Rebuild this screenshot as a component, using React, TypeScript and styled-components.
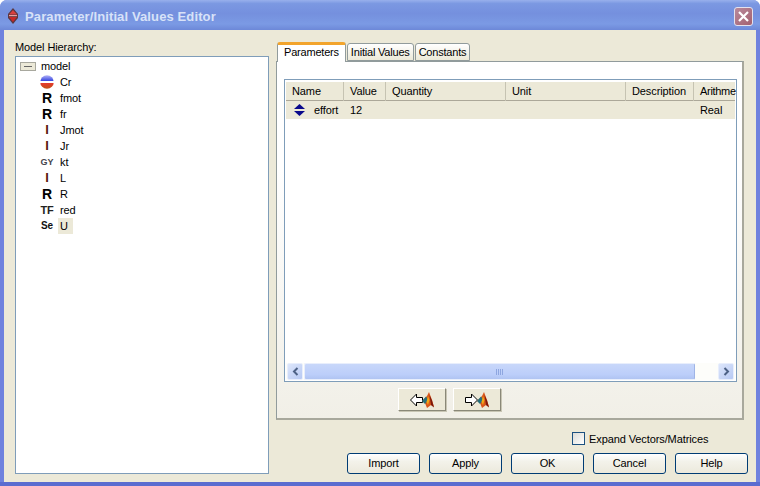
import React from "react"
import styled, { createGlobalStyle } from "styled-components"

const GlobalStyle = createGlobalStyle`
  html, body { margin: 0; padding: 0; background: #fff; }
  body { font-family: "Liberation Sans", Arial, sans-serif; font-size: 11px; letter-spacing: -0.1px; color: #000; }
`

const Window = styled.div`
  width: 760px;
  height: 486px;
  box-sizing: border-box;
  display: flex;
  flex-direction: column;
  background: #6f82de;
  border-bottom: 4px solid #5a6cd0;
  border-radius: 7px 7px 0 0;
  overflow: hidden;
`

const TitleBar = styled.div`
  height: 30px;
  flex: none;
  box-sizing: border-box;
  display: flex;
  align-items: center;
  padding: 2px 7px 0 7px;
  gap: 6px;
  background: linear-gradient(180deg, #98b0ec 0, #7b98e2 12%, #7590de 45%, #7b9ae4 80%, #6d88d8 100%);
`

const TitleText = styled.div`
  flex: 1;
  font-family: "Liberation Sans", Arial, sans-serif;
  font-weight: bold;
  font-size: 13px;
  letter-spacing: 0.12px;
  color: #d8e2f8;
  white-space: nowrap;
`

const CloseButton = styled.div`
  width: 19px;
  height: 19px;
  box-sizing: border-box;
  border: 1px solid #e4e2ee;
  border-radius: 3px;
  background: linear-gradient(135deg, #b88a9c, #a4606f);
  display: flex;
  align-items: center;
  justify-content: center;
`

const Client = styled.div`
  flex: 1;
  margin: 0 4px;
  box-sizing: border-box;
  background: #ece9d8;
  display: flex;
  gap: 7px;
  padding: 11px 8px 11px 11px;
`

const LeftColumn = styled.div`
  width: 254px;
  display: flex;
  flex-direction: column;
`

const TreeLabel = styled.div`
  height: 15px;
  line-height: 13px;
`

const TreeBox = styled.div`
  flex: 1;
  box-sizing: border-box;
  border: 1px solid #7f9db9;
  background: #fff;
  padding: 1px 0 0 4px;
`

const TreeRow = styled.div<{ $root?: boolean }>`
  height: 16px;
  display: flex;
  align-items: center;
  padding-left: ${(p) => (p.$root ? 0 : 16)}px;
`

const IconSlot = styled.div<{ $wide?: boolean }>`
  width: ${(p) => (p.$wide ? 19 : 22)}px;
  flex: none;
  display: flex;
  justify-content: ${(p) => (p.$wide ? "flex-start" : "center")};
  align-items: center;
`

const Glyph = styled.span<{ $size: number; $color: string }>`
  font-weight: bold;
  font-size: ${(p) => p.$size}px;
  color: ${(p) => p.$color};
  line-height: 16px;
`

const TreeName = styled.span<{ $selected?: boolean }>`
  line-height: 16px;
  padding: 0 2px;
  background: ${(p) => (p.$selected ? "#ece9d8" : "transparent")};
  min-width: ${(p) => (p.$selected ? 11 : 0)}px;
`

const RightColumn = styled.div`
  flex: 1;
  display: flex;
  flex-direction: column;
`

const TabStrip = styled.div`
  display: flex;
  align-items: flex-end;
  padding: 1px 0 0 1px;
  gap: 1px;
  margin-bottom: -1px;
  position: relative;
  z-index: 1;
`

const Tab = styled.div<{ $active?: boolean }>`
  box-sizing: border-box;
  height: ${(p) => (p.$active ? 20 : 18)}px;
  padding: 0 ${(p) => (p.$active ? 6 : 3)}px ${(p) => (p.$active ? 3 : 0)}px;
  display: flex;
  align-items: center;
  letter-spacing: -0.2px;
  border: 1px solid #919b9c;
  border-bottom: ${(p) => (p.$active ? "none" : "1px solid #919b9c")};
  border-top: ${(p) => (p.$active ? "3px solid #f2a42c" : "1px solid #919b9c")};
  border-radius: 3px 3px 0 0;
  background: ${(p) => (p.$active ? "#fff" : "linear-gradient(180deg, #fff, #ece9d8)")};
  margin-bottom: ${(p) => (p.$active ? 0 : 1)}px;
`

const TabPanel = styled.div`
  width: 468px;
  height: 359px;
  box-sizing: border-box;
  border: 1px solid #919b9c;
  border-right: 2px solid #a8a89c;
  border-bottom: 2px solid #a8a89c;
  background: linear-gradient(180deg, #fff 0, #fff 30%, #f1efe7 100%);
  padding: 17px 5px 0 7px;
  display: flex;
  flex-direction: column;
`

const TableFrame = styled.div`
  height: 303px;
  flex: none;
  box-sizing: border-box;
  border: 1px solid #7f9db9;
  background: #fff;
  padding: 2px 1px 1px;
  display: flex;
  flex-direction: column;
`

const columns = "58px 42px 120px 120px 68px 1fr"

const HeaderRow = styled.div`
  display: grid;
  grid-template-columns: ${columns};
  height: 19px;
  background: #ece9d8;
  border-bottom: 1px solid #aca899;
  box-sizing: border-box;
`

const HeaderCell = styled.div`
  line-height: 19px;
  padding-left: 6px;
  white-space: nowrap;
  border-right: 1px solid #c6c3b2;
  &:last-child {
    border-right: none;
    letter-spacing: -0.3px;
  }
`

const DataRow = styled.div`
  display: grid;
  grid-template-columns: ${columns};
  height: 18px;
  background: #ece9d8;
`

const DataCell = styled.div`
  line-height: 18px;
  padding-left: 6px;
  white-space: nowrap;
  display: flex;
  align-items: center;
`

const NameCell = styled(DataCell)`
  padding-left: 8px;
  gap: 9px;
`

const ScrollBar = styled.div`
  margin-top: auto;
  height: 17px;
  display: flex;
  align-items: stretch;
  gap: 1px;
  background: #fdfdfa;
  padding: 0 1px;
`

const ScrollButton = styled.div`
  width: 16px;
  box-sizing: border-box;
  border: 1px solid #e8eefc;
  border-radius: 2px;
  background: linear-gradient(135deg, #dde6fb, #b7c9f3);
  display: flex;
  align-items: center;
  justify-content: center;
`

const ScrollThumb = styled.div`
  width: 391px;
  box-sizing: border-box;
  border: 1px solid #e8eefc;
  border-right-color: #9fb4e6;
  border-radius: 2px;
  background: linear-gradient(180deg, #c8d7fa, #bccefa 70%, #b0c4f2);
  display: flex;
  align-items: center;
  justify-content: center;
  gap: 1px;
`

const Grip = styled.i`
  width: 1px;
  height: 6px;
  background: #8ea6e0;
`

const ScrollSpacer = styled.div`
  flex: 1;
`

const TransferRow = styled.div`
  display: flex;
  gap: 7px;
  margin-top: 6px;
  padding-left: 114px;
`

const TransferButton = styled.div`
  width: 48px;
  height: 23px;
  box-sizing: border-box;
  background: #ece9d8;
  border: 1px solid;
  border-color: #fff #8a8878 #8a8878 #fff;
  box-shadow: 1px 1px 0 #c8c5b4;
  display: flex;
  align-items: center;
  justify-content: center;
`

const CheckRow = styled.div`
  display: flex;
  align-items: center;
  gap: 4px;
  margin-top: 12px;
  padding-left: 296px;
  height: 13px;
`

const CheckBox = styled.div`
  width: 13px;
  height: 13px;
  box-sizing: border-box;
  border: 1px solid #1c5180;
  background: linear-gradient(135deg, #dcdcd7, #fff);
`

const ButtonRow = styled.div`
  display: flex;
  gap: 9px;
  margin-top: 8px;
  padding-left: 71px;
`

const DialogButton = styled.div`
  width: 73px;
  height: 21px;
  box-sizing: border-box;
  border: 1px solid #003c74;
  border-radius: 3px;
  padding-bottom: 1px;
  background: linear-gradient(180deg, #fff, #f3f2ea 40%, #ece9dc);
  display: flex;
  align-items: center;
  justify-content: center;
  white-space: nowrap;
`

const BondIcon = () => (
  <svg width="14" height="14" viewBox="0 0 14 14">
    <defs>
      <linearGradient id="ball" x1="0" y1="0" x2="0" y2="1">
        <stop offset="0" stopColor="#b4b4f6" />
        <stop offset="0.44" stopColor="#2f3fe0" />
        <stop offset="0.45" stopColor="#fff" />
        <stop offset="0.55" stopColor="#fff" />
        <stop offset="0.56" stopColor="#e83830" />
        <stop offset="1" stopColor="#c05018" />
      </linearGradient>
    </defs>
    <circle cx="7" cy="7" r="6.8" fill="url(#ball)" />
  </svg>
)

const ModelIcon = () => (
  <svg width="16" height="9" viewBox="0 0 16 9">
    <rect x="0.5" y="0.5" width="15" height="8" fill="#ece9d8" stroke="#a8a89e" />
    <rect x="4" y="4" width="8" height="1" fill="#666" />
  </svg>
)

const TitleIcon = () => (
  <svg width="12" height="16" viewBox="0 0 12 16">
    <path d="M6 0 L11 6 V10 L6 16 L1 10 V6 Z" fill="#5a3840" />
    <path d="M6 2 L10 6.5 H2 Z" fill="#d84040" />
    <path d="M2 9 H10 L6 14 Z" fill="#c82828" />
    <rect x="2" y="7" width="8" height="1.2" fill="#e8a0a0" />
  </svg>
)

const CloseIcon = () => (
  <svg width="13" height="13" viewBox="0 0 13 13">
    <path d="M2 2 L11 11 M11 2 L2 11" stroke="#fff" strokeWidth="2.2" />
  </svg>
)

const DiamondIcon = () => (
  <svg width="11" height="12" viewBox="0 0 11 12">
    <path d="M5.5 0 L11 5 H0 Z" fill="#0a0a8c" />
    <path d="M0 7 H11 L5.5 12 Z" fill="#0a0a8c" />
  </svg>
)

const ScrollArrow = ({ right }: { right?: boolean }) => (
  <svg width="7" height="9" viewBox="0 0 7 9">
    <path d={right ? "M1.5 1 L5 4.5 L1.5 8" : "M5.5 1 L2 4.5 L5.5 8"} fill="none" stroke="#4d6185" strokeWidth="2" />
  </svg>
)

const TransferIcon = ({ right }: { right?: boolean }) => (
  <svg width="24" height="16" viewBox="0 0 24 16">
    <path
      d={right ? "M0.5 5.5 H6.5 V2 L12.5 8 L6.5 14 V10.5 H0.5 Z" : "M12.5 5.5 H6.5 V2 L0.5 8 L6.5 14 V10.5 H12.5 Z"}
      fill="#fff"
      stroke="#000"
    />
    <path d="M12 9 L17 4 L19 0 L22 8 L24 15 L21 13 L17 16 L15 11 Z" fill="#d8561a" />
    <path d="M12 9 L16 4.5 L18 8 L15 12 Z" fill="#26707c" />
    <path d="M18 4 L19.5 8 L18 13 L16.5 10 Z" fill="#f0a818" />
    <path d="M19.5 3 L22 8.5 L24 15.5 L21 13 Z" fill="#7c180c" />
  </svg>
)

const treeItems = [
  { name: "Cr", icon: <BondIcon /> },
  { name: "fmot", icon: <Glyph $size={14} $color="#000">R</Glyph> },
  { name: "fr", icon: <Glyph $size={14} $color="#000">R</Glyph> },
  { name: "Jmot", icon: <Glyph $size={13} $color="#5a1a10">I</Glyph> },
  { name: "Jr", icon: <Glyph $size={13} $color="#5a1a10">I</Glyph> },
  { name: "kt", icon: <Glyph $size={9} $color="#44444c">GY</Glyph> },
  { name: "L", icon: <Glyph $size={13} $color="#5a1a10">I</Glyph> },
  { name: "R", icon: <Glyph $size={14} $color="#000">R</Glyph> },
  { name: "red", icon: <Glyph $size={11} $color="#222">TF</Glyph> },
  { name: "U", icon: <Glyph $size={10} $color="#111">Se</Glyph>, selected: true },
]

const headers = ["Name", "Value", "Quantity", "Unit", "Description", "Arithme"]
const dialogButtons = ["Import", "Apply", "OK", "Cancel", "Help"]

export default function App() {
  return (
    <Window>
      <GlobalStyle />
      <TitleBar>
        <TitleIcon />
        <TitleText>Parameter/Initial Values Editor</TitleText>
        <CloseButton>
          <CloseIcon />
        </CloseButton>
      </TitleBar>
      <Client>
        <LeftColumn>
          <TreeLabel>Model Hierarchy:</TreeLabel>
          <TreeBox>
            <TreeRow $root>
              <IconSlot $wide>
                <ModelIcon />
              </IconSlot>
              <TreeName>model</TreeName>
            </TreeRow>
            {treeItems.map((item) => (
              <TreeRow key={item.name}>
                <IconSlot>{item.icon}</IconSlot>
                <TreeName $selected={item.selected}>{item.name}</TreeName>
              </TreeRow>
            ))}
          </TreeBox>
        </LeftColumn>
        <RightColumn>
          <TabStrip>
            <Tab $active>Parameters</Tab>
            <Tab>Initial Values</Tab>
            <Tab>Constants</Tab>
          </TabStrip>
          <TabPanel>
            <TableFrame>
              <HeaderRow>
                {headers.map((h) => (
                  <HeaderCell key={h}>{h}</HeaderCell>
                ))}
              </HeaderRow>
              <DataRow>
                <NameCell>
                  <DiamondIcon />
                  effort
                </NameCell>
                <DataCell>12</DataCell>
                <DataCell />
                <DataCell />
                <DataCell />
                <DataCell>Real</DataCell>
              </DataRow>
              <ScrollBar>
                <ScrollButton>
                  <ScrollArrow />
                </ScrollButton>
                <ScrollThumb>
                  <Grip />
                  <Grip />
                  <Grip />
                  <Grip />
                </ScrollThumb>
                <ScrollSpacer />
                <ScrollButton>
                  <ScrollArrow right />
                </ScrollButton>
              </ScrollBar>
            </TableFrame>
            <TransferRow>
              <TransferButton>
                <TransferIcon />
              </TransferButton>
              <TransferButton>
                <TransferIcon right />
              </TransferButton>
            </TransferRow>
          </TabPanel>
          <CheckRow>
            <CheckBox />
            Expand Vectors/Matrices
          </CheckRow>
          <ButtonRow>
            {dialogButtons.map((b) => (
              <DialogButton key={b}>{b}</DialogButton>
            ))}
          </ButtonRow>
        </RightColumn>
      </Client>
    </Window>
  )
}
